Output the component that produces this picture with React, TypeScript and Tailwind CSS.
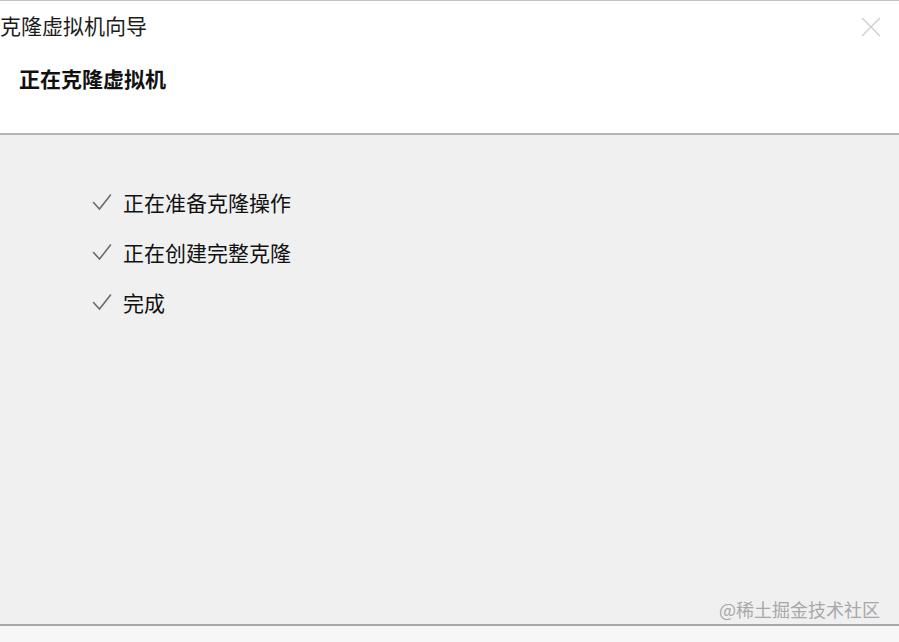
const font = { fontFamily: '"Microsoft YaHei", "Noto Sans CJK SC", sans-serif' };

const steps = ["正在准备克隆操作", "正在创建完整克隆", "完成"];

function CheckMark() {
  return (
    <svg width="20" height="18" viewBox="0 0 20 18" className="shrink-0">
      <path
        d="M1.5 9.5 L7.5 16 L18.5 2"
        fill="none"
        stroke="#6b6b6b"
        strokeWidth="1.6"
        strokeLinecap="round"
      />
    </svg>
  );
}

export default function App() {
  return (
    <div
      className="flex h-[642px] w-[899px] flex-col overflow-hidden bg-white"
      style={font}
    >
      <div className="relative h-[133px] shrink-0 border-t border-[#c4c4c4] bg-white">
        <div className="pt-[10px] text-[21px] leading-[28px] text-[#1c1c1c]">
          克隆虚拟机向导
        </div>
        <div className="mt-[25px] pl-[19px] text-[21px] font-bold leading-[28px] text-[#111]">
          正在克隆虚拟机
        </div>
        <svg
          width="20"
          height="20"
          viewBox="0 0 20 20"
          className="absolute right-[18px] top-[16px]"
        >
          <path
            d="M1 1 L19 19 M19 1 L1 19"
            stroke="#cfcfcf"
            strokeWidth="1.4"
          />
        </svg>
      </div>
      <div className="h-[2px] shrink-0 bg-[#b4b4b4]" />
      <div className="flex flex-1 flex-col bg-[#f0f0f0] pl-[92px] pt-[42px]">
        {steps.map((s) => (
          <div key={s} className="flex h-[50px] items-center gap-[11px]">
            <CheckMark />
            <span className="text-[21px] leading-[28px] text-[#111]">
              {s}
            </span>
          </div>
        ))}
        <div className="flex-1" />
        <div className="flex justify-end pb-[3px] pr-[19px] text-[18px] leading-[24px] text-[#a8a8a8]">
          @稀土掘金技术社区
        </div>
      </div>
      <div className="h-[2px] shrink-0 bg-[#a8a8a8]" />
      <div className="h-[16px] shrink-0 bg-[#f7f7f7]" />
    </div>
  );
}
